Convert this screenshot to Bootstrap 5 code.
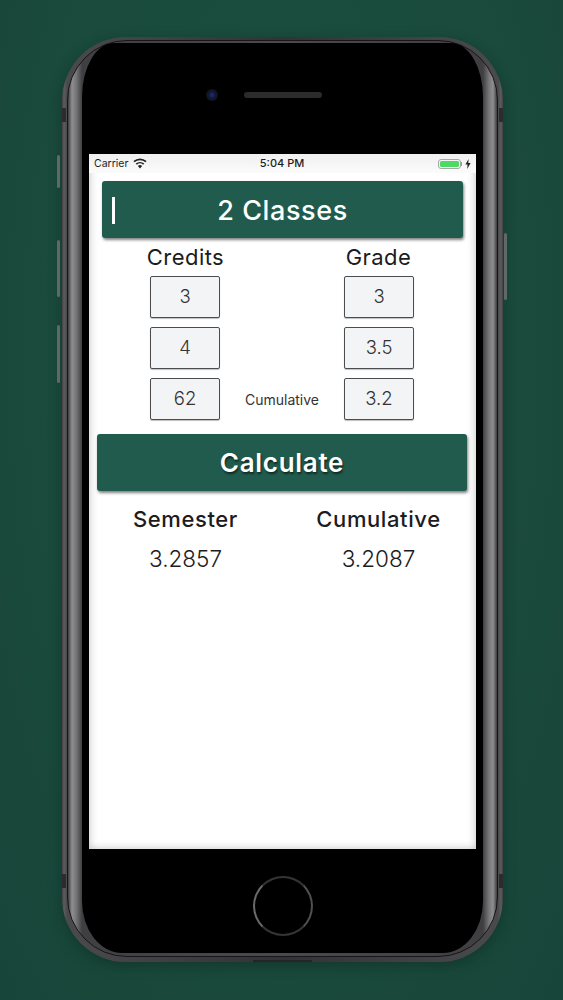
<!DOCTYPE html>
<html lang="en">
<head>
<meta charset="utf-8">
<title>GPA Calculator</title>
<link href="https://cdn.jsdelivr.net/npm/bootstrap@5.3.0/dist/css/bootstrap.min.css" rel="stylesheet">
<style>
html,body{height:1000px;overflow:hidden}
body{background:radial-gradient(ellipse at 50% 35%,#1b5040 0%,#1a4b3c 60%,#18453a 100%);font-family:Inter,"Open Sans","Liberation Sans",sans-serif;color:#1c1c1e;padding-top:37px}
.handset{position:relative;width:441px;height:925px;margin-left:62px;border-radius:64px;padding:3px 5px 5px;background:linear-gradient(90deg,#404042 0,#5c5c5e 2px,#4a4a4c 5px,#333335 50%,#4a4a4c calc(100% - 5px),#5c5c5e calc(100% - 2px),#404042 100%);box-shadow:0 4px 14px rgba(8,30,24,.4)}
.shell{height:100%;border-radius:60px;border:1px solid #161618;padding:2px 14px 3px;background:linear-gradient(90deg,#3c3c3e 0,#8e8e90 4px,#777779 8px,#3f3f41 14px,#4a4a4c 50%,#3f3f41 calc(100% - 14px),#777779 calc(100% - 8px),#8e8e90 calc(100% - 4px),#3c3c3e 100%)}
.face{height:100%;background:#000;border-radius:32px 32px 40px 40px/54px 54px 52px 52px;display:flex;flex-direction:column;align-items:center;padding:0 7px}
.topzone{height:111px;width:100%;padding-top:46px;padding-left:117px;gap:26px}
.lens{width:12px;height:12px;border-radius:50%;background:radial-gradient(circle,#1b2f78 0,#11162e 45%,#121216 75%)}
.slit{width:78px;height:6px;margin-top:3px;border-radius:3px;background:#2b2b2d}
.display{width:387px;height:695px;flex:none;background:#fff;box-shadow:inset 0 0 9px rgba(60,60,70,.32)}
.statusline{height:19px;padding:0 5px;font-size:10.5px;position:relative;background:linear-gradient(#f0f0f1,#fbfbfb)}
.statusline .clock{position:absolute;left:-1px;right:0;text-align:center;font-weight:500;font-size:11px}
.cellicon{width:14px;height:11px;margin-left:5px}
.batt{width:23px;height:10px;border:1px solid #a7a7a7;border-radius:3px;padding:1px}
.batt span{display:block;height:100%;background:#4cd964;border-radius:1.5px}
.batnub{width:1px;height:4px;background:#999;margin-right:3px}
.bannerbar{width:361px;height:57px;margin:8px 0 0 13px;padding-top:3px;position:relative;background:#205b4d;color:#fff;border-radius:3px;box-shadow:1px 2px 3px rgba(0,0,0,.5);font-size:27px;font-weight:500;letter-spacing:.6px}
.caretmark{position:absolute;left:10px;top:16px;width:3px;height:27px;background:#fff}
.twoup{width:386px}
.twoup>div{text-align:center;white-space:nowrap}
.headrow{font-size:22px;line-height:26px;margin-top:6px;letter-spacing:.45px}
.inputrow{width:264px;margin-left:61px;height:42px}
.inputrow+.inputrow{margin-top:9px}
.headrow+.inputrow{margin-top:6px}
.inputrow .form-control{width:70px;height:42px;padding:0;flex:none;border:1px solid #4a4d4f;border-radius:2px;background:#f2f4f5;color:#333;font-size:18.5px;font-weight:300;display:flex;align-items:center;justify-content:center;box-shadow:0 1px 1px rgba(0,0,0,.25)}
.midnote{flex:1;text-align:center;font-size:14px;color:#333;white-space:nowrap}
.calcbtn{display:block;width:370px;height:57px;margin:14px 0 0 8px;padding:0;border:0;background:#205b4d;color:#fff;border-radius:3px;box-shadow:1px 2px 3px rgba(0,0,0,.5);font-size:26px;font-weight:600;text-shadow:1px 2px 2px rgba(0,0,0,.55);letter-spacing:.7px}
.calcbtn:hover{background:#205b4d;color:#fff}
.reshead{font-size:22px;line-height:26px;margin-top:15px;font-weight:500;letter-spacing:.6px}
.resval{font-size:22.5px;font-weight:300;line-height:30px;margin-top:12px}
.bottomzone{flex:1;width:100%;padding-top:9px}
.homekey{width:60px;height:60px;border-radius:50%;border:2px solid #343436;border-left-color:#6a6a6d;border-right-color:#505052}
.sidekey{position:absolute;width:3px;background:#5f6a68;border-radius:2px}
.k1{left:-5px;top:118px;height:33px}.k2{left:-5px;top:203px;height:57px}.k3{left:-5px;top:288px;height:58px}.k4{right:-4px;top:196px;height:67px}
.tick{position:absolute;width:4px;height:14px;background:#2c2c2e}
.t1{left:0;top:71px}.t2{right:0;top:71px}.t3{left:0;bottom:74px}.t4{right:0;bottom:74px}
.portline{position:absolute;left:191px;bottom:0;width:59px;height:2px;background:#252527}
</style>
</head>
<body>
<div class="handset">
  <span class="sidekey k1"></span><span class="sidekey k2"></span><span class="sidekey k3"></span><span class="sidekey k4"></span>
  <span class="tick t1"></span><span class="tick t2"></span><span class="tick t3"></span><span class="tick t4"></span>
  <span class="portline"></span>
  <div class="shell">
    <div class="face">
      <div class="topzone d-flex align-items-start">
        <span class="lens"></span><span class="slit"></span>
      </div>
      <div class="display">
        <div class="statusline d-flex align-items-center">
          <span>Carrier</span>
          <svg class="cellicon" viewBox="0 0 14 11" aria-hidden="true"><path d="M7 10.5 4.9 8a3 3 0 0 1 4.2 0z" fill="#222"/><path d="M3.3 6.2a5.4 5.4 0 0 1 7.4 0M1 3.7a8.8 8.8 0 0 1 12 0" fill="none" stroke="#222" stroke-width="1.7"/></svg>
          <span class="clock">5:04 PM</span>
          <span class="ms-auto batt"><span></span></span><span class="batnub"></span>
          <svg width="6" height="10" viewBox="0 0 6 10" aria-hidden="true"><path d="M3.6 0 .4 5.6h2.2L2.2 10l3.4-6H3.3z" fill="#222"/></svg>
        </div>
        <div class="bannerbar d-flex align-items-center justify-content-center"><span class="caretmark"></span>2 Classes</div>
        <div class="twoup d-flex headrow"><div class="w-50">Credits</div><div class="w-50">Grade</div></div>
        <div class="inputrow d-flex align-items-center"><div class="form-control">3</div><div class="midnote"></div><div class="form-control">3</div></div>
        <div class="inputrow d-flex align-items-center"><div class="form-control">4</div><div class="midnote"></div><div class="form-control">3.5</div></div>
        <div class="inputrow d-flex align-items-center"><div class="form-control">62</div><div class="midnote">Cumulative</div><div class="form-control">3.2</div></div>
        <button class="btn calcbtn" type="button">Calculate</button>
        <div class="twoup d-flex reshead"><div class="w-50">Semester</div><div class="w-50">Cumulative</div></div>
        <div class="twoup d-flex resval"><div class="w-50">3.2857</div><div class="w-50">3.2087</div></div>
      </div>
      <div class="bottomzone d-flex align-items-center justify-content-center"><div class="homekey"></div></div>
    </div>
  </div>
</div>
<script src="https://cdn.jsdelivr.net/npm/bootstrap@5.3.0/dist/js/bootstrap.bundle.min.js"></script>
</body>
</html>
